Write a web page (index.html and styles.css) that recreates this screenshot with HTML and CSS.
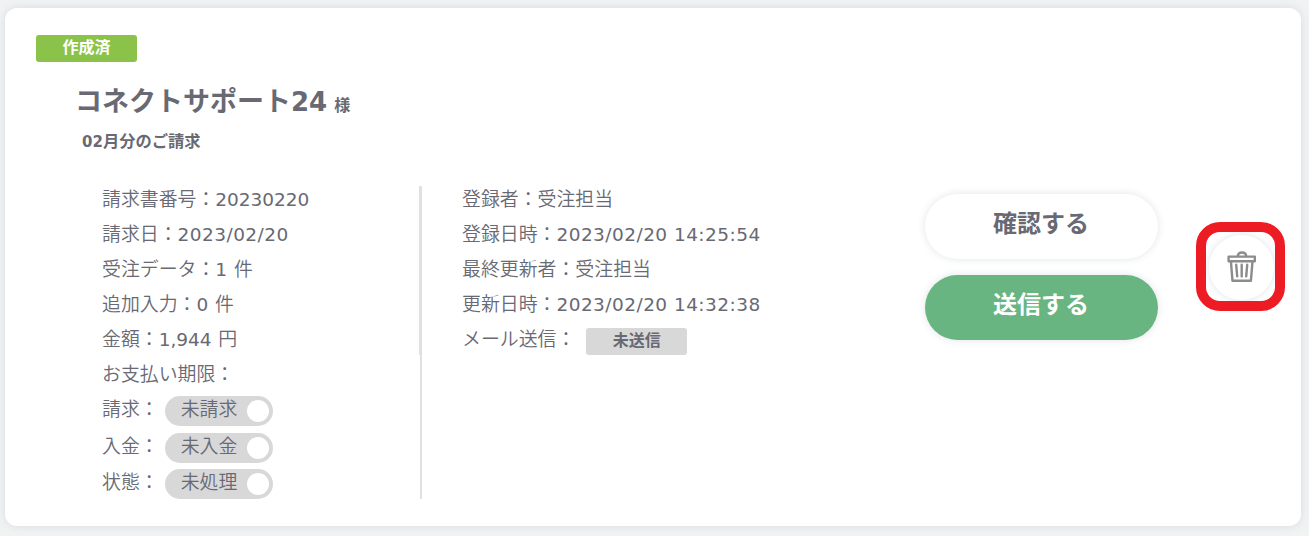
FILE: index.html
```html
<!DOCTYPE html>
<html lang="ja">
<head>
  <meta charset="UTF-8">
  <meta name="viewport" content="width=device-width, initial-scale=1">
  <title>請求書一覧</title>
  <link rel="stylesheet" href="styles.css">
</head>
<body>

  <div class="card">
    <div class="status">作成済</div>
    <div class="customer">コネクトサポート<span class="customer-num">24</span><span class="honorific">様</span></div>
    <div class="subject"><span class="subject-num">02</span>月分のご請求</div>

    <div class="content">
      <div class="column invoice">
        <div class="row">請求書番号：<span class="num">20230220</span></div>
        <div class="row">請求日：<span class="date">2023/02/20</span></div>
        <div class="row">受注データ：<span class="num">1 </span>件</div>
        <div class="row">追加入力：<span class="num">0 </span>件</div>
        <div class="row">金額：<span class="num">1,944 </span>円</div>
        <div class="row">お支払い期限：</div>
        <div class="toggle-row">請求：<button class="toggle">未請求<span class="knob"></span></button></div>
        <div class="toggle-row">入金：<button class="toggle">未入金<span class="knob"></span></button></div>
        <div class="toggle-row">状態：<button class="toggle">未処理<span class="knob"></span></button></div>
      </div>

      <div class="column history">
        <div class="row">登録者：受注担当</div>
        <div class="row">登録日時：<span class="date">2023/02/20 14:25:54</span></div>
        <div class="row">最終更新者：受注担当</div>
        <div class="row">更新日時：<span class="date">2023/02/20 14:32:38</span></div>
        <div class="row mail">メール送信：<span class="mail-status">未送信</span></div>
      </div>

      <div class="actions">
        <button class="btn">確認する</button>
        <button class="btn btn-send">送信する</button>
      </div>

      <div class="delete-frame">
        <button class="delete" aria-label="削除">
          <svg width="32" height="32" viewBox="0 0 32 32" fill="none" stroke="#8c8c8c" stroke-width="2.4" stroke-linejoin="round">
            <path d="M11.8 5c.5-4.6 7.9-4.6 8.4 0"/>
            <path d="M2.6 5.6h26.2v4.6H2.6z"/>
            <path d="M4.9 10.4l1.6 19.4h18.4l1.6-19.4"/>
            <path d="M10.2 13.8l1 11.6M15.7 13.8v11.6M21.2 13.8l-1 11.6" stroke-linecap="round"/>
          </svg>
        </button>
      </div>
    </div>
  </div>

</body>
</html>
```
FILE: styles.css
```css
* {
  box-sizing: border-box;
}
body {
  margin: 0;
  padding: 8px 8px 10px 5px;
  background-color: #f1f3f3;
  color: #686973;
  font-family: "Noto Sans CJK JP", sans-serif;
}
button {
  border: none;
  padding: 0;
  color: inherit;
  font-family: inherit;
  cursor: pointer;
}
.card {
  height: 518px;
  padding: 27px 16px 0 31px;
  background: #fff;
  border-radius: 12px;
  box-shadow: 0 0 10px #d6dce0;
}
.status, .mail-status {
  width: 101px;
  height: 27px;
  border-radius: 3px;
  font-size: 16px;
  font-weight: bold;
  line-height: 22px;
  text-align: center;
}
.status {
  background: #8bc34a;
  color: #fff;
}
.customer {
  height: 44px;
  margin: 16px 0 0 39px;
  font-size: 27px;
  font-weight: bold;
  line-height: 44px;
}
.customer-num, .subject-num, .num, .date {
  font-family: "DejaVu Sans", sans-serif;
}
.customer-num {
  font-size: 26px;
}
.honorific {
  margin-left: 7px;
  font-size: 16px;
}
.subject {
  height: 24px;
  margin: 7px 0 0 46px;
  font-size: 16.3px;
  font-weight: bold;
  line-height: 22px;
}
.subject-num {
  font-size: 15px;
}
.content {
  display: flex;
  align-items: flex-start;
  margin: 33px 0 0 66px;
}
.column {
  font-size: 18.9px;
  font-weight: 350;
  line-height: 24px;
  white-space: nowrap;
}
.invoice {
  width: 320px;
  height: 313px;
  border-right: 2px solid #dde2dc;
}
.history {
  width: 465px;
  height: 169px;
  margin-left: -3px;
  padding-left: 40px;
  border-left: 3px solid #dde2dc;
}
.row {
  height: 35px;
}
.num, .date {
  font-size: 18.5px;
  font-weight: 400;
}
.num {
  letter-spacing: -0.05px;
  word-spacing: 1px;
}
.date {
  letter-spacing: 0.45px;
}
.toggle-row {
  display: flex;
  height: 30px;
  margin-bottom: 6.5px;
}
.toggle {
  display: flex;
  justify-content: space-between;
  width: 108px;
  height: 30px;
  margin-left: 6px;
  padding: 0 4px 0 16px;
  border-radius: 15px;
  background: #d8d8d8;
  font-size: 18.9px;
  font-weight: 350;
  line-height: 24px;
}
.knob {
  width: 22px;
  height: 22px;
  margin-top: 4px;
  border-radius: 50%;
  background: #fff;
}
.mail {
  display: flex;
}
.mail-status {
  margin: 2px 0 0 11px;
  background: #d8d8d8;
}
.actions {
  display: flex;
  flex-direction: column;
  gap: 16px;
  margin: 8px 0 0 41px;
}
.btn {
  width: 233px;
  height: 65px;
  padding: 0 1px 10px 0;
  border-radius: 33px;
  background: #fff;
  box-shadow: 0 0 8px #e0e4e7;
  font-size: 24px;
  font-weight: bold;
}
.btn-send {
  background: #69b581;
  color: #fff;
}
.delete-frame {
  display: flex;
  align-items: center;
  justify-content: center;
  width: 89px;
  height: 89px;
  margin: 36px 0 0 38px;
  padding: 1px 0 0 2px;
  border: 10px solid #ed1c24;
  border-radius: 24px;
  overflow: hidden;
}
.delete {
  display: flex;
  flex-shrink: 0;
  align-items: center;
  justify-content: center;
  width: 65px;
  height: 65px;
  border-radius: 50%;
  background: #fff;
  box-shadow: 0 0 7px #dde1e5;
}
```
